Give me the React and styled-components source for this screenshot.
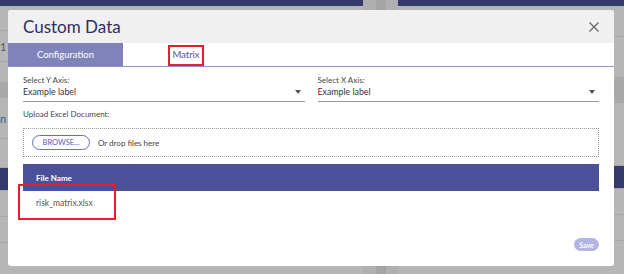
import React from "react";
import styled, { createGlobalStyle } from "styled-components";

const GlobalStyle = createGlobalStyle`
  html, body {
    margin: 0;
    padding: 0;
    background: #b4b4b4;
    font-family: Lato, "Open Sans", sans-serif;
  }
`;

const Screen = styled.div`
  position: relative;
  width: 624px;
  height: 274px;
  overflow: hidden;
  display: grid;
  grid-template-columns: 363px 35px 1fr;
  background: #b4b4b4;
`;

const AppColumn = styled.div`
  display: flex;
  flex-direction: column;
  border-top: 6px solid #343a6b;
  background: #b6b6b6;
`;

const Splitter = styled.div`
  display: flex;
  justify-content: center;
  background: #b0b0b0;
  & > div {
    width: 10px;
    background: #a4a4a4;
  }
`;

const AppRow = styled.div`
  height: ${(p) => p.h}px;
  flex-shrink: 0;
  border-bottom: 1px solid #a8a8a8;
  background: ${(p) => (p.dark ? "#343a6b" : p.shade ? "#a9a9a9" : "transparent")};
  font-size: 11px;
  color: ${(p) => (p.blue ? "#2a5f96" : "#555")};
  display: flex;
  align-items: center;
  padding-left: ${(p) => p.pl || 0}px;
  white-space: nowrap;
  overflow: hidden;
`;

const Overlay = styled.div`
  position: absolute;
  inset: 0;
  padding: 10px 10px 8px 8px;
  display: flex;
`;

const Modal = styled.div`
  width: 606px;
  height: 256px;
  background: #fff;
  border-radius: 3px;
  display: flex;
  flex-direction: column;
  overflow: hidden;
  position: relative;
`;

const Header = styled.div`
  height: 33px;
  background: #f0f0f0;
  display: flex;
  align-items: center;
  justify-content: space-between;
  padding: 0 14px 0 15px;
`;

const Title = styled.h2`
  margin: 0;
  font-size: 17px;
  font-weight: 400;
  color: #2e3158;
`;

const Close = styled.button`
  border: 0;
  background: none;
  padding: 0;
  width: 12px;
  height: 12px;
  display: flex;
`;

const Tabs = styled.div`
  display: flex;
  height: 23px;
  border-bottom: 1px solid #8e92d1;
`;

const Tab = styled.div`
  width: ${(p) => p.w}px;
  background: ${(p) => (p.active ? "#7f83b9" : "#fff")};
  color: ${(p) => (p.active ? "#fff" : "#4f54a3")};
  font-size: 9.5px;
  display: flex;
  align-items: center;
  justify-content: center;
  position: relative;
`;

const Mark = styled.span`
  position: absolute;
  border: 2px solid #e3202b;
  left: ${(p) => p.x}px;
  top: ${(p) => p.y}px;
  width: ${(p) => p.w}px;
  height: ${(p) => p.h}px;
  box-sizing: border-box;
`;

const Body = styled.div`
  flex: 1;
  display: flex;
  flex-direction: column;
  padding: 8px 15px 15px;
  position: relative;
`;

const SelectGrid = styled.div`
  display: grid;
  grid-template-columns: 1fr 1fr;
  gap: 13px;
`;

const Field = styled.div`
  display: flex;
  flex-direction: column;
`;

const Label = styled.div`
  font-size: 8px;
  color: #474747;
  line-height: 10px;
`;

const SelectBox = styled.div`
  display: flex;
  align-items: flex-start;
  justify-content: space-between;
  height: 15px;
  margin-top: 1px;
  border-bottom: 1px solid #9a9a9a;
  font-size: 8.8px;
  line-height: 12px;
  color: #333;
  padding-right: 4px;
  & > span {
    margin-top: 4px;
  }
`;

const Caret = styled.span`
  width: 0;
  height: 0;
  border-left: 3.5px solid transparent;
  border-right: 3.5px solid transparent;
  border-top: 4px solid #555;
`;

const Upload = styled.div`
  margin-top: 7px;
  display: flex;
  flex-direction: column;
`;

const Drop = styled.div`
  margin-top: 9px;
  height: 29px;
  box-sizing: border-box;
  border: 1px dotted #999;
  display: flex;
  align-items: center;
  gap: 8px;
  padding-left: 8px;
`;

const Browse = styled.button`
  width: 58px;
  height: 15px;
  border: 1px solid #6a6fb5;
  border-radius: 8px;
  background: #fff;
  color: #575cab;
  font-family: inherit;
  font-size: 7.5px;
  padding: 0;
`;

const Hint = styled.span`
  font-size: 8px;
  color: #444;
`;

const Table = styled.div`
  margin-top: 7px;
  display: flex;
  flex-direction: column;
`;

const TableHead = styled.div`
  height: 27px;
  background: #4b5199;
  color: #fff;
  font-size: 8px;
  font-weight: 700;
  display: flex;
  align-items: center;
  padding-left: 13px;
`;

const TableCell = styled.div`
  height: 24px;
  display: flex;
  align-items: center;
  padding-left: 13px;
  font-size: 8.5px;
  color: #555;
`;

const Footer = styled.div`
  margin-top: auto;
  display: flex;
  justify-content: flex-end;
`;

const Save = styled.button`
  width: 25px;
  height: 13px;
  border: 0;
  border-radius: 7px;
  background: #b3b5e0;
  color: #fff;
  font-family: inherit;
  font-size: 7px;
  font-weight: 700;
  padding: 0;
`;

const axes = ["Y", "X"];

export default function App() {
  return (
    <>
      <GlobalStyle />
      <Screen>
        <AppColumn>
          <AppRow h={24} />
          <AppRow h={30}>1</AppRow>
          <AppRow h={20} />
          <AppRow h={14} shade />
          <AppRow h={40} blue>
            n A
          </AppRow>
          <AppRow h={28} />
          <AppRow h={22} dark />
          <AppRow h={25} />
          <AppRow h={25} />
          <AppRow h={40} pl={30}>
            ····· ··· ······ ···
          </AppRow>
        </AppColumn>
        <Splitter>
          <div />
        </Splitter>
        <AppColumn>
          <AppRow h={30} />
          <AppRow h={40} />
          <AppRow h={24} shade />
          <AppRow h={62} />
          <AppRow h={22} dark />
          <AppRow h={25} />
          <AppRow h={25} />
          <AppRow h={40} />
        </AppColumn>

        <Overlay>
          <Modal>
            <Header>
              <Title>Custom Data</Title>
              <Close aria-label="Close">
                <svg width="12" height="12" viewBox="0 0 12 12">
                  <path d="M1.5 1.5 L10.5 10.5 M10.5 1.5 L1.5 10.5" stroke="#6b6b6b" strokeWidth="1.4" />
                </svg>
              </Close>
            </Header>
            <Tabs>
              <Tab active w={115}>Configuration</Tab>
              <Tab w={126}>
                Matrix
                <Mark x={45} y={2} w={36} h={21} />
              </Tab>
            </Tabs>
            <Body>
              <SelectGrid>
                {axes.map((a) => (
                  <Field key={a}>
                    <Label>Select {a} Axis:</Label>
                    <SelectBox>
                      Example label
                      <Caret />
                    </SelectBox>
                  </Field>
                ))}
              </SelectGrid>
              <Upload>
                <Label>Upload Excel Document:</Label>
                <Drop>
                  <Browse>BROWSE...</Browse>
                  <Hint>Or drop files here</Hint>
                </Drop>
              </Upload>
              <Table>
                <TableHead>File Name</TableHead>
                <TableCell>risk_matrix.xlsx</TableCell>
              </Table>
              <Mark x={10} y={117} w={98} h={36} />
              <Footer>
                <Save>Save</Save>
              </Footer>
            </Body>
          </Modal>
        </Overlay>
      </Screen>
    </>
  );
}
